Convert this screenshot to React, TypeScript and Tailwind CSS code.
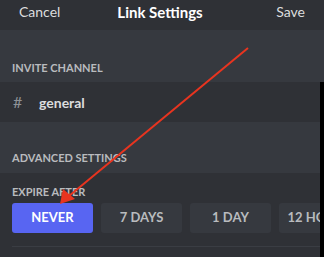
export default function App() {
  const options = ["NEVER", "7 DAYS", "1 DAY", "12 HOURS"];
  return (
    <div className="relative w-[324px] h-[257px] overflow-hidden bg-[#36393f] font-['Lato',sans-serif]">
      {/* header */}
      <div className="h-[30px] bg-[#2f3136] grid grid-cols-[1fr_auto_1fr] items-start px-[19px] pt-[2px] leading-[20px]">
        <span className="text-[#dcddde] text-[14px]">Cancel</span>
        <span className="text-white font-bold text-[15px] -ml-[4px]">Link Settings</span>
        <span className="text-[#dcddde] text-[14px] text-right">Save</span>
      </div>

      <div className="pt-[31px] px-[12px] pb-[7px]">
        <div className="text-[11px] leading-[14px] font-bold text-[#b9bbbe]">INVITE CHANNEL</div>
      </div>

      <div className="border-r-4 border-black">
        <div className="h-[40px] bg-[#2f3136] flex items-center px-[13px] text-[14px]">
          <span className="text-[#8e9297] w-[26px] text-[16px]">#</span>
          <span className="text-[#dcddde] font-bold">general</span>
        </div>

        <div className="h-[51px] flex items-end px-[12px] pb-[8px]">
          <div className="text-[11px] leading-[14px] font-bold text-[#b9bbbe]">ADVANCED SETTINGS</div>
        </div>

        <div className="h-[84px] bg-[#2f3136] pt-[12px] pl-[12px]">
          <div className="text-[11px] leading-[14px] font-bold text-[#b9bbbe]">EXPIRE AFTER</div>
          <div className="flex gap-[8px] mt-[4px] overflow-hidden">
            {options.map((o, i) => (
              <div
                key={o}
                className={
                  i === 0
                    ? "shrink-0 w-[81px] h-[30px] rounded-[3px] bg-[#5865f2] text-white flex items-center justify-center text-[13px] font-bold"
                    : "shrink-0 w-[81px] h-[30px] rounded-[3px] bg-[#36393f] text-[#b9bbbe] flex items-center justify-center text-[13px] font-bold whitespace-nowrap"
                }
              >
                {o}
              </div>
            ))}
          </div>
          <div className="mt-[13px] h-px bg-[#3a3d43]" />
        </div>
      </div>

      {/* annotation arrow */}
      <svg className="absolute left-0 top-0 pointer-events-none" width="324" height="257">
        <line x1="248" y1="48" x2="69" y2="196" stroke="#e8341f" strokeWidth="2" />
        <polygon points="60,204 63,189 75,199" fill="#e8341f" />
      </svg>
    </div>
  );
}
